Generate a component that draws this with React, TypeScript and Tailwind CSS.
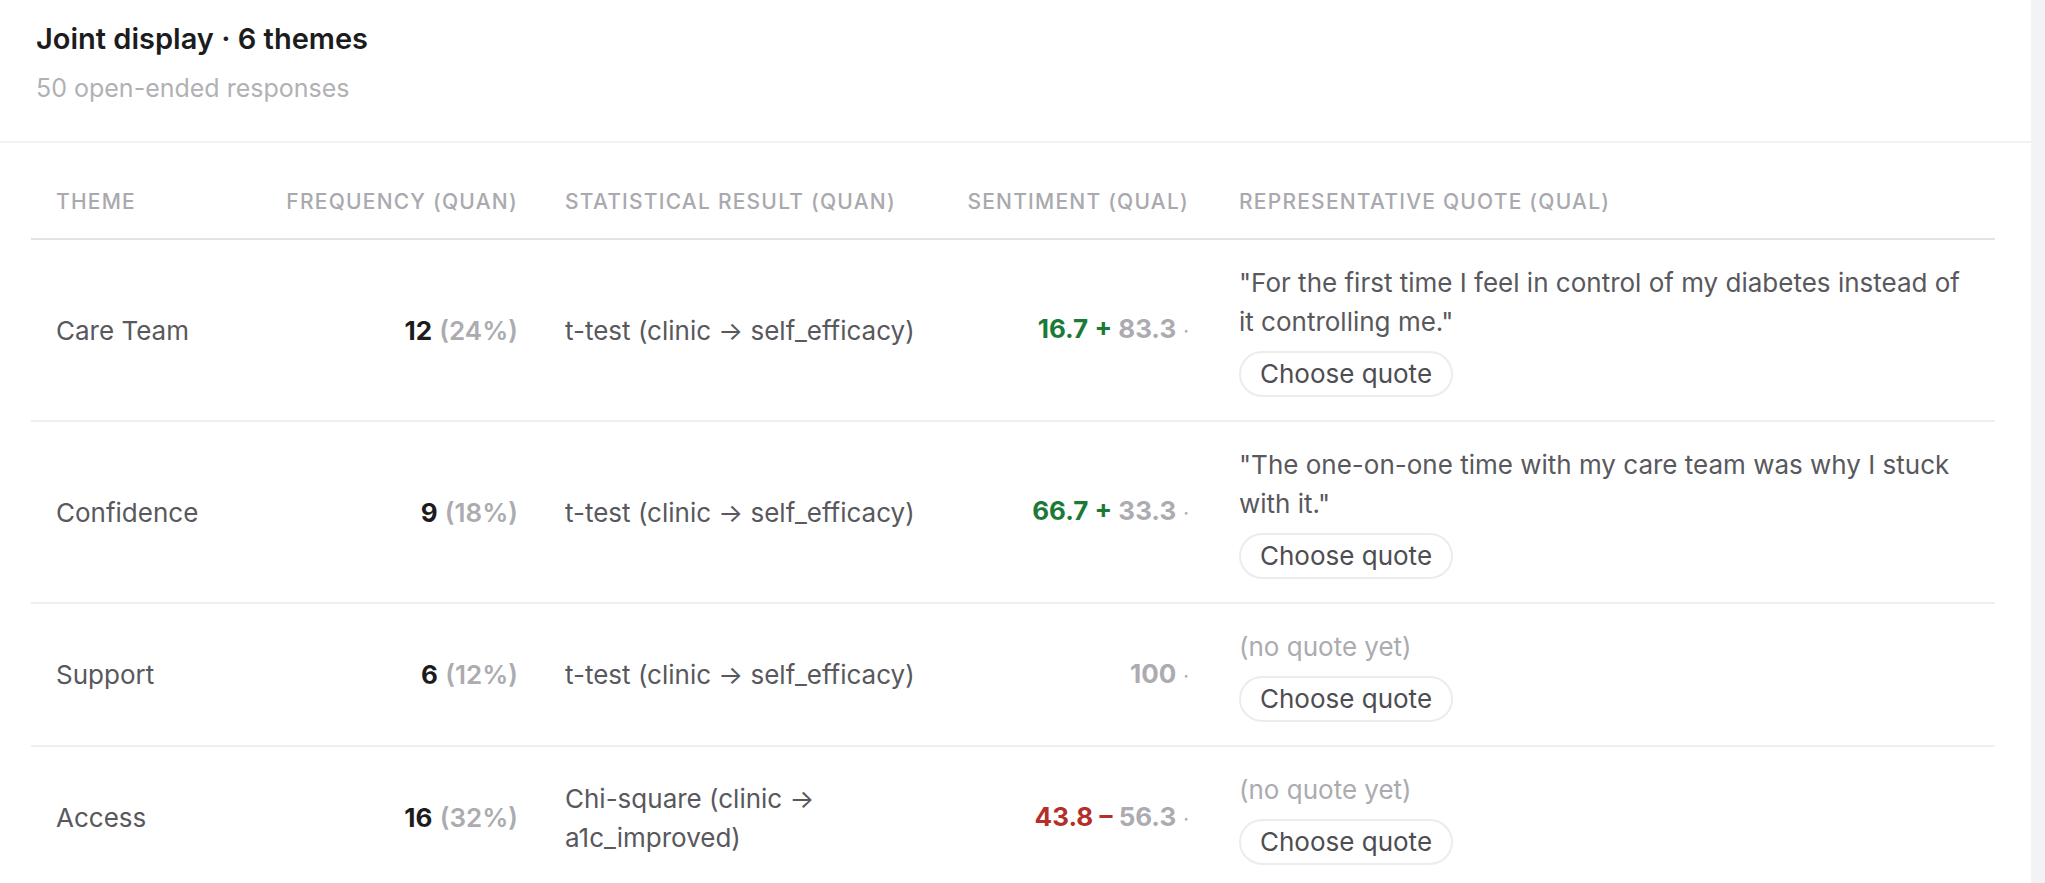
import React from "react";

type Row = {
  theme: string;
  count: number;
  pct: number;
  stat: string;
  lead?: { value: string; sign: "+" | "–" };
  neutral: string;
  quote?: string;
};

const rows: Row[] = [
  {
    theme: "Care Team",
    count: 12,
    pct: 24,
    stat: "t-test (clinic → self_efficacy)",
    lead: { value: "16.7", sign: "+" },
    neutral: "83.3",
    quote: "\"For the first time I feel in control of my diabetes instead of it controlling me.\"",
  },
  {
    theme: "Confidence",
    count: 9,
    pct: 18,
    stat: "t-test (clinic → self_efficacy)",
    lead: { value: "66.7", sign: "+" },
    neutral: "33.3",
    quote: "\"The one-on-one time with my care team was why I stuck with it.\"",
  },
  {
    theme: "Support",
    count: 6,
    pct: 12,
    stat: "t-test (clinic → self_efficacy)",
    neutral: "100",
  },
  {
    theme: "Access",
    count: 16,
    pct: 32,
    stat: "Chi-square (clinic → a1c_improved)",
    lead: { value: "43.8", sign: "–" },
    neutral: "56.3",
  },
];

const Sentiment = ({ row }: { row: Row }) => {
  const tone = row.lead?.sign === "–" ? "text-[#b3302a]" : "text-[#1b7a35]";
  return (
    <span className="font-bold whitespace-nowrap">
      {row.lead && (
        <span className={tone}>
          {row.lead.value} {row.lead.sign}{" "}
        </span>
      )}
      <span className="text-[#ababb0]">{row.neutral}</span>
      <span className="text-[#ababb0] font-normal text-[20px] ml-[7px]">·</span>
    </span>
  );
};

const App = () => {
  return (
    <div
      className="flex h-[883px] w-full overflow-hidden bg-white text-[#58585d]"
      style={{ fontFamily: "Inter, 'Noto Sans', sans-serif" }}
    >
      <main className="flex-1 min-w-0">
        {/* Header */}
        <header className="px-[36px] pt-[21px] pb-[38px] border-b-2 border-[#f2f2f4]">
          <h1 className="text-[29px] leading-[36px] font-semibold text-[#1c1c1e]">
            Joint display · 6 themes
          </h1>
          <p className="mt-[16px] text-[25px] leading-[30px] text-[#b1b1b5]">
            50 open-ended responses
          </p>
        </header>

        {/* Joint display table */}
        <div className="pl-[31px] pr-[36px] pt-[24px]">
          <table className="w-full table-fixed border-collapse text-[26px] leading-[39px]">
            <colgroup>
              <col className="w-[231px]" />
              <col className="w-[278px]" />
              <col className="w-[406px]" />
              <col className="w-[268px]" />
              <col />
            </colgroup>
            <thead>
              <tr className="border-b-2 border-[#e3e3e6] text-[21px] leading-[28px] font-medium uppercase tracking-[0.058em] text-[#a9a9ae] whitespace-nowrap">
                <th className="px-[25px] pt-[21px] pb-[22px] text-left font-medium">Theme</th>
                <th className="pl-[10px] pr-[22px] pt-[21px] pb-[22px] text-right font-medium">Frequency (quan)</th>
                <th className="px-[25px] pt-[21px] pb-[22px] text-left font-medium">Statistical result (quan)</th>
                <th className="pl-[8px] pr-[25px] pt-[21px] pb-[22px] text-right font-medium">Sentiment (qual)</th>
                <th className="px-[25px] pt-[21px] pb-[22px] text-left font-medium">Representative quote (qual)</th>
              </tr>
            </thead>
            <tbody>
              {rows.map((row) => (
                <tr key={row.theme} className="border-b-2 border-[#efeff1] align-middle">
                  <td className="px-[25px] py-[23px]">{row.theme}</td>
                  <td className="pl-[10px] pr-[22px] py-[23px] text-right whitespace-nowrap">
                    <span className="font-bold text-[#1c1c1e]">{row.count}</span>{" "}
                    <span className="font-semibold text-[#ababb0]">({row.pct}%)</span>
                  </td>
                  <td className="px-[25px] py-[23px]">{row.stat}</td>
                  <td className="pl-[8px] pr-[25px] py-[23px] text-right">
                    <Sentiment row={row} />
                  </td>
                  <td className="pl-[25px] pr-[30px] py-[23px]">
                    {row.quote ? (
                      <p>{row.quote}</p>
                    ) : (
                      <p className="text-[#ababb0]">(no quote yet)</p>
                    )}
                    <button className="mt-[10px] flex items-center h-[46px] px-[19px] rounded-full border-2 border-[#ececee] bg-white text-[#4d4d52] leading-none">
                      Choose quote
                    </button>
                  </td>
                </tr>
              ))}
            </tbody>
          </table>
        </div>
      </main>
      <aside className="w-[14px] shrink-0 bg-[#f3f3f5]" />
    </div>
  );
};

export default App;
